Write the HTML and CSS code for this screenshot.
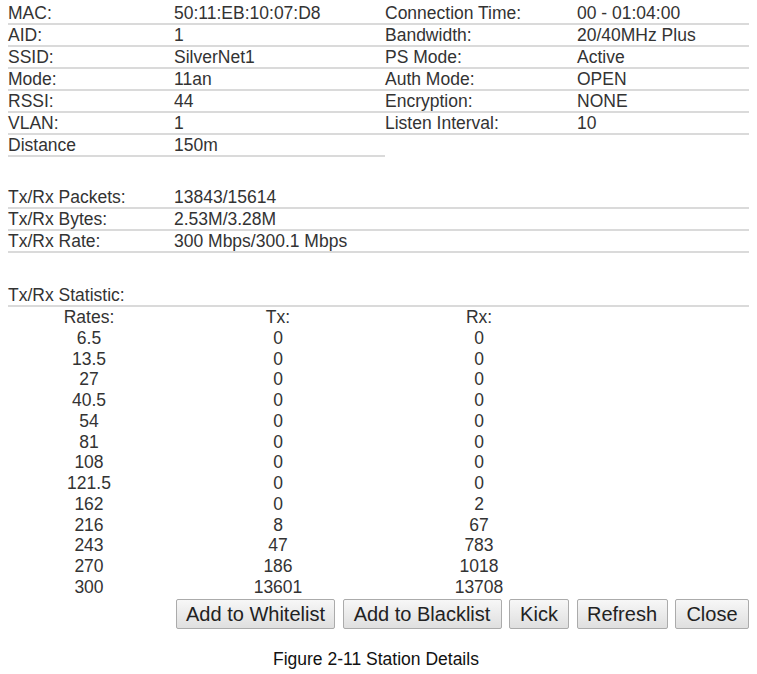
FILE: index.html
```html
<!DOCTYPE html>
<html>
<head>
<meta charset="utf-8">
<link rel="stylesheet" href="styles.css">
</head>
<body>
<div class="page">
  <section class="info">
    <div class="col col-left">
      <div class="row"><span class="lbl">MAC:</span><span class="val">50:11:EB:10:07:D8</span></div>
      <div class="row"><span class="lbl">AID:</span><span class="val">1</span></div>
      <div class="row"><span class="lbl">SSID:</span><span class="val">SilverNet1</span></div>
      <div class="row"><span class="lbl">Mode:</span><span class="val">11an</span></div>
      <div class="row"><span class="lbl">RSSI:</span><span class="val">44</span></div>
      <div class="row"><span class="lbl">VLAN:</span><span class="val">1</span></div>
      <div class="row"><span class="lbl">Distance</span><span class="val">150m</span></div>
    </div>
    <div class="col col-right">
      <div class="row"><span class="lbl">Connection Time:</span><span class="val">00 - 01:04:00</span></div>
      <div class="row"><span class="lbl">Bandwidth:</span><span class="val">20/40MHz Plus</span></div>
      <div class="row"><span class="lbl">PS Mode:</span><span class="val">Active</span></div>
      <div class="row"><span class="lbl">Auth Mode:</span><span class="val">OPEN</span></div>
      <div class="row"><span class="lbl">Encryption:</span><span class="val">NONE</span></div>
      <div class="row"><span class="lbl">Listen Interval:</span><span class="val">10</span></div>
    </div>
  </section>

  <section class="traffic">
    <div class="row"><span class="lbl">Tx/Rx Packets:</span><span class="val">13843/15614</span></div>
    <div class="row"><span class="lbl">Tx/Rx Bytes:</span><span class="val">2.53M/3.28M</span></div>
    <div class="row"><span class="lbl">Tx/Rx Rate:</span><span class="val">300 Mbps/300.1 Mbps</span></div>
  </section>

  <div class="row stat-title"><span class="lbl">Tx/Rx Statistic:</span></div>

  <div class="stats">
    <span>Rates:</span><span>Tx:</span><span>Rx:</span>
    <span>6.5</span><span>0</span><span>0</span>
    <span>13.5</span><span>0</span><span>0</span>
    <span>27</span><span>0</span><span>0</span>
    <span>40.5</span><span>0</span><span>0</span>
    <span>54</span><span>0</span><span>0</span>
    <span>81</span><span>0</span><span>0</span>
    <span>108</span><span>0</span><span>0</span>
    <span>121.5</span><span>0</span><span>0</span>
    <span>162</span><span>0</span><span>2</span>
    <span>216</span><span>8</span><span>67</span>
    <span>243</span><span>47</span><span>783</span>
    <span>270</span><span>186</span><span>1018</span>
    <span>300</span><span>13601</span><span>13708</span>
  </div>

  <div class="actions">
    <button class="btn btn-list">Add to Whitelist</button>
    <button class="btn btn-list">Add to Blacklist</button>
    <button class="btn btn-kick">Kick</button>
    <button class="btn btn-refresh">Refresh</button>
    <button class="btn btn-close">Close</button>
  </div>

  <p class="caption">Figure 2-11 Station Details</p>
</div>
</body>
</html>
```

FILE: styles.css
```css
html, body {
  margin: 0;
  padding: 0;
  background: #ffffff;
}

body {
  font-family: "Liberation Sans", Arial, sans-serif;
  color: #333333;
}

.page {
  width: 741px;
  padding: 3px 0 0 8px;
  font-size: 17.5px;
}

.info {
  display: flex;
}

.col-left {
  width: 377px;
}

.col-right {
  width: 364px;
}

.row {
  display: flex;
  height: 20px;
  line-height: 20px;
  border-bottom: 2px solid #dadada;
  white-space: nowrap;
}

.col-left .lbl {
  width: 166px;
}

.col-right .lbl {
  width: 192px;
}

.traffic {
  margin-top: 30px;
}

.traffic .lbl {
  width: 166px;
}

.stat-title {
  margin-top: 32px;
}

.stats {
  display: grid;
  grid-template-columns: 162px 216px 186px;
  grid-auto-rows: 20.75px;
  line-height: 20.75px;
  text-align: center;
}

.actions {
  display: flex;
  gap: 7.5px;
  margin-top: 1.5px;
  padding-left: 168px;
  width: 600px;
}

.btn {
  flex: 0 0 auto;
  white-space: nowrap;
  height: 30px;
  padding: 0;
  border: 1px solid #ababab;
  border-radius: 2px;
  background: linear-gradient(#f7f7f7, #dfdfdf);
  font-family: "Liberation Sans", Arial, sans-serif;
  font-size: 20px;
  color: #222222;
  line-height: 28px;
  text-align: center;
}

.btn-list {
  width: 159px;
}

.btn-kick {
  width: 60px;
}

.btn-refresh {
  width: 91px;
}

.btn-close {
  width: 74px;
}

.caption {
  margin: 20px 0 0 0;
  padding-left: 265px;
  font-size: 17.5px;
  line-height: 20px;
  color: #111111;
}
```
